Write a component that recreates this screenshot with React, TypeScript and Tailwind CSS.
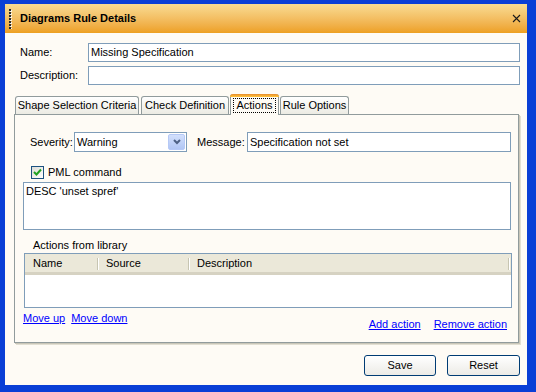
export default function App() {
  return (
    <div className="w-[536px] h-[392px] bg-[#0a3fd6] flex flex-col pl-[5px] pr-[9px] pt-[4px] pb-[7px] font-['Liberation_Sans',Arial,sans-serif] text-[11px] leading-[13px] text-black">
      {/* Title bar */}
      <div className="h-[29px] flex items-center bg-linear-to-b from-[#f8dc92] to-[#eda01f]">
        <svg width="4" height="20" className="ml-[4px]" viewBox="0 0 4 20">
          {[0, 1, 2, 3, 4, 5, 6].map((i) => (
            <g key={i}>
              <rect x="0" y={i * 3} width="2" height="2" fill="#2b2b2b" />
              <rect x="1" y={i * 3 + 1} width="2" height="2" fill="#ffffff" opacity="0.8" />
              <rect x="0" y={i * 3} width="2" height="2" fill="#2b2b2b" />
            </g>
          ))}
        </svg>
        <span className="ml-[7px] font-bold text-[11px]">Diagrams Rule Details</span>
        <svg width="9" height="9" viewBox="0 0 9 9" className="ml-auto mr-[6px]">
          <path d="M1 1 L8 8 M8 1 L1 8" stroke="#1a1a1a" strokeWidth="1.1" />
        </svg>
      </div>

      {/* Body */}
      <div className="flex-1 bg-[#fefbf5] flex flex-col">
        <div className="mt-[10px] flex items-center pl-[15px] pr-[7px]">
          <span className="w-[68px]">Name:</span>
          <div className="flex-1 h-[19px] border border-[#7f9db9] bg-white px-[2px] flex items-center">
            Missing Specification
          </div>
        </div>
        <div className="mt-[4px] flex items-center pl-[15px] pr-[7px]">
          <span className="w-[68px]">Description:</span>
          <div className="flex-1 h-[19px] border border-[#7f9db9] bg-white" />
        </div>

        {/* Tabs */}
        <div className="mt-[9px] pl-[10px] flex items-end h-[20px]">
          <div className="w-[124px] h-[18px] border border-b-0 border-[#919b9c] rounded-t-[3px] bg-linear-to-b from-white to-[#ecebe3] flex items-center justify-center">
            Shape Selection Criteria
          </div>
          <div className="ml-[2px] w-[88px] h-[18px] border border-b-0 border-[#919b9c] rounded-t-[3px] bg-linear-to-b from-white to-[#ecebe3] flex items-center justify-center">
            Check Definition
          </div>
          <div className="relative z-10 -mb-px ml-px w-[49px] h-[21px] border-x border-[#919b9c] rounded-t-[3px] bg-[#fefbf5] flex flex-col">
            <div className="h-[3px] -mx-px rounded-t-[3px] bg-linear-to-b from-[#e68b2c] to-[#ffc73c]" />
            <div className="flex-1 flex items-start justify-center pt-[1px]">
              <span className="border border-dotted border-black px-[2px] leading-[13px]">Actions</span>
            </div>
          </div>
          <div className="ml-px w-[69px] h-[18px] border border-b-0 border-[#919b9c] rounded-t-[3px] bg-linear-to-b from-white to-[#ecebe3] flex items-center justify-center">
            Rule Options
          </div>
        </div>

        {/* Tab panel */}
        <div className="ml-[9px] mr-[8px] h-[229px] border border-[#919b9c] bg-[#fefbf5] shadow-[1px_1px_0_#c9c6b8,2px_2px_0_#e2dfd2] flex flex-col">
          <div className="mt-[17px] pl-[15px] flex items-center">
            <span className="w-[44px]">Severity:</span>
            <div className="w-[113px] h-[20px] border border-[#7f9db9] bg-white flex items-center pl-[2px]">
              <span className="flex-1">Warning</span>
              <div className="w-[17px] h-[16px] mr-px rounded-[2px] border border-[#b6c9f6] bg-linear-to-b from-[#d3e0fc] to-[#b1c6f4] flex items-center justify-center">
                <svg width="8" height="6" viewBox="0 0 8 6">
                  <path d="M1 1 L4 4 L7 1" stroke="#4d6185" strokeWidth="2" fill="none" />
                </svg>
              </div>
            </div>
            <span className="ml-[10px] w-[50px]">Message:</span>
            <div className="w-[264px] h-[20px] border border-[#7f9db9] bg-white flex items-center px-[2px]">
              Specification not set
            </div>
          </div>

          <div className="mt-[14px] pl-[16px] flex items-center">
            <div className="w-[13px] h-[13px] border border-[#1c5180] bg-linear-to-br from-[#dcdcd6] to-white flex items-center justify-center">
              <svg width="9" height="9" viewBox="0 0 9 9">
                <path d="M1 4 L3.5 6.5 L8 1.5" stroke="#21a121" strokeWidth="2" fill="none" />
              </svg>
            </div>
            <span className="ml-[4px]">PML command</span>
          </div>

          <div className="mt-[3px] ml-[8px] w-[488px] h-[48px] border border-[#7f9db9] bg-white px-[2px] pt-[2px]">
            DESC 'unset spref'
          </div>

          <div className="mt-[9px] pl-[18px]">Actions from library</div>

          <div className="mt-px ml-[9px] w-[488px] h-[55px] border border-[#7f9db9] bg-white flex flex-col">
            <div className="h-[21px] bg-[#ebe8d9] border-b-[3px] border-[#d6d2c2] flex items-center">
              <div className="w-[74px] h-full flex items-center pl-[8px] relative">
                Name
                <div className="absolute right-0 top-[4px] h-[12px] w-[2px] border-l border-[#c7c5b2] border-r border-r-white" />
              </div>
              <div className="w-[91px] h-full flex items-center pl-[7px] relative">
                Source
                <div className="absolute right-0 top-[4px] h-[12px] w-[2px] border-l border-[#c7c5b2] border-r border-r-white" />
              </div>
              <div className="w-[320px] h-full flex items-center pl-[7px] relative">
                Description
                <div className="absolute right-0 top-[4px] h-[12px] w-[2px] border-l border-[#c7c5b2] border-r border-r-white" />
              </div>
            </div>
          </div>

          <div className="flex items-start pl-[8px] pr-[11px]">
            <div className="mt-[4px] flex">
              <span className="text-[#0000ff] underline">Move up</span>
              <span className="ml-[6px] text-[#0000ff] underline">Move down</span>
            </div>
            <div className="ml-auto mt-[10px] flex">
              <span className="text-[#0000ff] underline">Add action</span>
              <span className="ml-[13px] text-[#0000ff] underline">Remove action</span>
            </div>
          </div>
        </div>

        {/* Buttons */}
        <div className="mt-[12px] flex justify-end pr-[7px]">
          <div className="w-[72px] h-[21px] border border-[#003c74] rounded-[3px] bg-linear-to-b from-white to-[#ecebe6] flex items-center justify-center">
            Save
          </div>
          <div className="ml-[11px] w-[73px] h-[21px] border border-[#003c74] rounded-[3px] bg-linear-to-b from-white to-[#ecebe6] flex items-center justify-center">
            Reset
          </div>
        </div>
      </div>
    </div>
  )
}
